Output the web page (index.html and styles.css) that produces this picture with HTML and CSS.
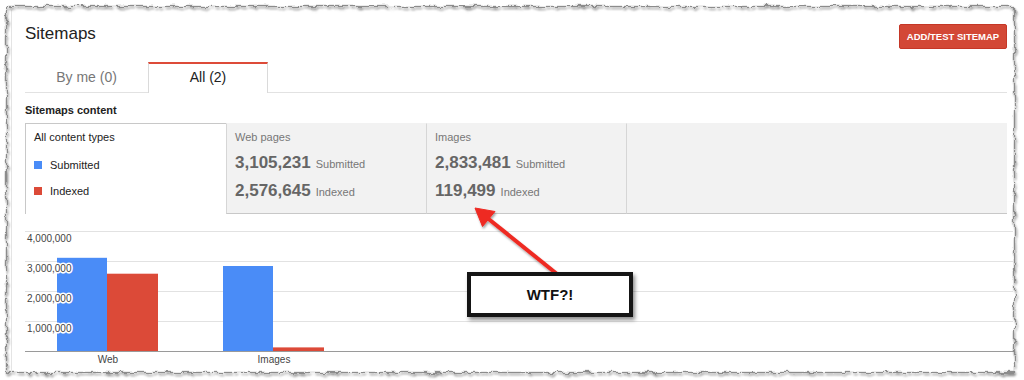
FILE: index.html
```html
<!DOCTYPE html>
<html lang="en">
<head>
    <meta charset="UTF-8">
    <title>Sitemaps</title>
    <link rel="stylesheet" href="styles.css">
</head>
<body>
    <div class="sheet">
        <div class="page">
            <header class="head">
                <h1>Sitemaps</h1>
                <button type="button" class="add-btn">ADD/TEST SITEMAP</button>
            </header>

            <nav class="tabs">
                <div class="tab">By me (0)</div>
                <div class="tab active">All (2)</div>
            </nav>

            <h2 class="section-title">Sitemaps content</h2>

            <div class="summary">
                <div class="cell selected">
                    <div class="cell-label dark">All content types</div>
                    <ul class="legend">
                        <li><span class="swatch blue"></span>Submitted</li>
                        <li><span class="swatch red"></span>Indexed</li>
                    </ul>
                </div>
                <div class="cell">
                    <div class="cell-label">Web pages</div>
                    <div class="stat"><b>3,105,231</b> Submitted</div>
                    <div class="stat"><b>2,576,645</b> Indexed</div>
                </div>
                <div class="cell">
                    <div class="cell-label">Images</div>
                    <div class="stat"><b>2,833,481</b> Submitted</div>
                    <div class="stat"><b>119,499</b> Indexed</div>
                </div>
                <div class="cell filler"></div>
            </div>

            <svg class="chart" width="988" height="156" viewBox="0 0 988 156">
                <g class="grid">
                    <line x1="0" y1="17.5" x2="988" y2="17.5"/>
                    <line x1="0" y1="47.5" x2="988" y2="47.5"/>
                    <line x1="0" y1="77.5" x2="988" y2="77.5"/>
                    <line x1="0" y1="107.5" x2="988" y2="107.5"/>
                </g>
                <rect x="32" y="43.8" width="50" height="93.2" fill="#4a8cf7"/>
                <rect x="82" y="59.7" width="51" height="77.3" fill="#dc4a38"/>
                <rect x="198" y="52" width="50" height="85" fill="#4a8cf7"/>
                <rect x="248" y="133.4" width="51" height="3.6" fill="#dc4a38"/>
                <line class="axis" x1="0" y1="137.5" x2="988" y2="137.5"/>
                <g class="ylabels">
                    <text x="2" y="28">4,000,000</text>
                    <text x="2" y="58">3,000,000</text>
                    <text x="2" y="88">2,000,000</text>
                    <text x="2" y="118">1,000,000</text>
                </g>
                <g class="xlabels">
                    <text x="83" y="149">Web</text>
                    <text x="249" y="149">Images</text>
                </g>
            </svg>
        </div>

        <!-- torn paper edge drawn over the screenshot -->
        <svg class="torn" width="1024" height="380" viewBox="0 0 1024 380">
            <defs>
                <filter id="rough" x="-2%" y="-4%" width="104%" height="108%">
                    <feTurbulence type="fractalNoise" baseFrequency="0.11" numOctaves="3" seed="7" result="noise"/>
                    <feDisplacementMap in="SourceGraphic" in2="noise" scale="6" xChannelSelector="R" yChannelSelector="G" result="edge"/>
                    <feGaussianBlur in="edge" stdDeviation="1.3" result="blur"/>
                    <feOffset in="blur" dx="1" dy="1.5" result="shadow"/>
                    <feMerge>
                        <feMergeNode in="shadow"/>
                        <feMergeNode in="edge"/>
                    </feMerge>
                </filter>
            </defs>
            <rect x="6.5" y="6.5" width="1008" height="366" fill="none" stroke="#8c8c8c" stroke-width="1.3" filter="url(#rough)"/>
        </svg>

        <svg class="arrow" width="110" height="80" viewBox="0 0 110 80">
            <defs>
                <filter id="arrow-shadow" x="-20%" y="-20%" width="140%" height="140%">
                    <feDropShadow dx="1" dy="2" stdDeviation="1.2" flood-color="#000" flood-opacity="0.35"/>
                </filter>
            </defs>
            <g filter="url(#arrow-shadow)" fill="#ee2a22" stroke="#ee2a22">
                <line x1="97" y1="76" x2="28" y2="20.5" stroke-width="4"/>
                <polygon points="15,10 22.5,28.5 35,13.5" stroke-width="1" stroke-linejoin="round"/>
            </g>
        </svg>

        <div class="callout">WTF?!</div>
    </div>
</body>
</html>
```

FILE: styles.css
```css
body { margin: 0; background: #fff; font-family: "Liberation Sans", Arial, sans-serif; color: #222; }

.sheet { position: relative; width: 1024px; height: 380px; overflow: hidden; }
.page {
    margin: 10px 0 0 11px;
    padding: 14px 0 0 13px;
    width: 982px;
    height: 346px;
    border-left: 1px solid #e4e4e4;
}

/* header */
.head { display: flex; justify-content: space-between; align-items: flex-start; height: 25px; }
.head h1 { margin: 0; font-size: 17px; font-weight: normal; line-height: 20px; color: #222; }
.add-btn {
    height: 25px;
    width: 108px;
    padding: 0;
    border: 1px solid #c53727;
    border-radius: 2px;
    background: #d34836;
    color: #fff;
    font-family: inherit;
    font-size: 9.5px;
    font-weight: bold;
}

/* tabs */
.tabs { display: flex; margin-top: 13px; height: 30px; border-bottom: 1px solid #e2e2e2; }
.tab { width: 123px; text-align: center; font-size: 14px; line-height: 30px; color: #777; }
.tab.active {
    width: 118px;
    height: 29px;
    line-height: 27px;
    border: 1px solid #dadada;
    border-top: 2px solid #dd4b39;
    border-bottom: none;
    background: #fff;
    color: #222;
}

.section-title { margin: 10px 0 6px; font-size: 11px; line-height: 14px; font-weight: bold; color: #222; }

/* summary strip */
.summary { display: flex; height: 91px; background: #f2f2f2; }
.cell {
    box-sizing: border-box;
    width: 200px;
    padding: 6px 8px 0;
    border-top: 1px solid #f2f2f2;
    border-left: 1px solid #d6d6d6;
    border-bottom: 1px solid #c8c8c8;
    font-size: 11px;
    color: #777;
}
.cell.selected { width: 201px; background: #fff; border-top-color: #c8c8c8; border-left-color: #c8c8c8; border-bottom: none; }
.cell.filler { flex: 1; padding: 0; }
.cell-label { line-height: 14px; }
.cell-label.dark { color: #222; }

.legend { list-style: none; margin: 14px 0 0; padding: 0; display: flex; flex-direction: column; gap: 12px; }
.legend li { display: flex; align-items: center; gap: 8px; line-height: 14px; color: #222; }
.swatch { width: 8px; height: 8px; }
.swatch.blue { background: #4a8cf7; }
.swatch.red { background: #dc4a38; }

.stat { margin-top: 9px; line-height: 20px; }
.stat + .stat { margin-top: 7px; }
.stat b { font-size: 17px; color: #666; margin-right: 2px; }

/* chart */
.chart { display: block; }
.chart .grid line { stroke: #e2e2e2; stroke-width: 1; }
.chart .axis { stroke: #9a9a9a; stroke-width: 1; }
.chart text { font-family: "Liberation Sans", Arial, sans-serif; font-size: 10px; fill: #444; }
.chart .ylabels text { stroke: #fff; stroke-width: 3px; paint-order: stroke; stroke-linejoin: round; }
.chart .xlabels text { text-anchor: middle; }

/* annotation overlays */
.torn { position: absolute; left: 0; top: 0; pointer-events: none; }
.arrow { position: absolute; left: 460px; top: 198px; }
.callout {
    position: absolute;
    left: 467px;
    top: 272px;
    box-sizing: border-box;
    width: 166px;
    height: 45px;
    border: 4px solid #151515;
    background: #fff;
    box-shadow: 2px 3px 4px rgba(0, 0, 0, 0.45);
    font-size: 15px;
    font-weight: bold;
    line-height: 37px;
    text-align: center;
    color: #111;
}
```
